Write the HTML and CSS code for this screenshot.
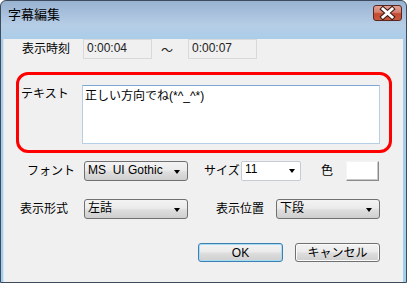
FILE: index.html
```html
<!DOCTYPE html>
<html lang="ja">
<head>
  <meta charset="UTF-8">
  <title>字幕編集</title>
  <link rel="stylesheet" href="styles.css">
</head>
<body>

  <div class="window">
    <div class="titlebar">
      <span class="title">字幕編集</span>
      <div class="close-btn">
        <svg width="29" height="16" viewBox="0 0 29 16">
          <path d="M10 4 L19 12 M19 4 L10 12" stroke="#3b1a16" stroke-width="5" stroke-linecap="square" fill="none"/>
          <path d="M10 4 L19 12 M19 4 L10 12" stroke="#ffffff" stroke-width="3" stroke-linecap="square" fill="none"/>
        </svg>
      </div>
    </div>

    <div class="client">
      <!-- 表示時刻 -->
      <div class="row row-time">
        <span class="label lbl-time">表示時刻</span>
        <div class="timebox">0:00:04</div>
        <span class="tilde">～</span>
        <div class="timebox">0:00:07</div>
      </div>

      <!-- テキスト -->
      <div class="group">
        <span class="label lbl-text">テキスト</span>
        <div class="textbox">正しい方向でね(*^_^*)</div>
      </div>

      <!-- フォント / サイズ / 色 -->
      <div class="row row-font">
        <span class="label lbl-font">フォント</span>
        <div class="select sel-font">MS&nbsp;&nbsp;UI Gothic<span class="arrow"></span></div>
        <span class="label lbl-size">サイズ</span>
        <div class="combo">11<span class="arrow"></span></div>
        <span class="label lbl-color">色</span>
        <div class="color-btn"></div>
      </div>

      <!-- 表示形式 / 表示位置 -->
      <div class="row row-pos">
        <span class="label lbl-format">表示形式</span>
        <div class="select">左詰<span class="arrow"></span></div>
        <span class="label lbl-place">表示位置</span>
        <div class="select">下段<span class="arrow"></span></div>
      </div>

      <div class="row row-buttons">
        <button class="btn btn-ok">OK</button>
        <button class="btn btn-cancel">キャンセル</button>
      </div>
    </div>
  </div>

</body>
</html>
```

FILE: styles.css
```css
* { margin: 0; padding: 0; box-sizing: border-box; }

body {
  font-family: 'Liberation Sans', 'Noto Sans CJK JP', sans-serif;
  font-size: 12px;
  line-height: 14px;
  color: #000;
  background: #ffffff;
}

.window {
  width: 407px;
  height: 283px;
  border: 1px solid #3d4b5c;
  border-radius: 6px 6px 0 0;
  background: linear-gradient(#98b2d1, #b6cde6 24px, #a9cde9 40px, #9fd0ee);
  overflow: hidden;
}

.titlebar {
  display: flex;
  align-items: flex-start;
  height: 24px;
}

.title {
  padding-left: 7px;
  margin-top: 6px;
  font-size: 13px;
  line-height: 15px;
  color: #000;
}

.close-btn {
  margin-left: auto;
  margin-right: 4px;
  margin-top: 4px;
  width: 29px;
  height: 16px;
  border: 1px solid #5a2620;
  border-radius: 3px;
  background: linear-gradient(#e2a193, #d5806e 45%, #c44b34 55%, #c65a3c);
  display: flex;
  align-items: center;
  justify-content: center;
}

.close-btn svg { display: block; margin: -1px; }

.client {
  margin: 0 3px 2px 2px;
  height: 255px;
  background: #f0f0f0;
  border-left: 1px solid #d6e2ee;
}

.row {
  display: flex;
  align-items: center;
}

.label {
  white-space: nowrap;
}

/* time row */
.row-time { margin-top: 14px; height: 20px; }
.lbl-time { margin-left: 18px; width: 61px; }

.timebox {
  width: 69px;
  height: 20px;
  border: 1px solid #d9d9d9;
  background: #f0f0f0;
  padding: 1px 3px;
  align-self: flex-start;
  color: #222;
}

.tilde {
  width: 12px;
  margin: 4px 15px 0 9px;
  font-size: 12px;
  color: #222;
}

/* text group */
.group {
  display: flex;
  margin: 13px 0 0 12px;
  width: 376px;
  height: 81px;
  border: 3px solid #ff0000;
  border-radius: 12px;
  padding: 10px 0 0 2px;
}

.lbl-text { width: 61px; margin-top: 2px; }

.textbox {
  width: 298px;
  height: 59px;
  background: #ffffff;
  border: 1px solid #b5cfe7;
  border-top-color: #7ea8d3;
  padding: 3px 2px;
}

/* font row */
.row-font { margin-top: 8px; height: 20px; }
.lbl-font { margin-left: 23px; width: 57px; }

.select {
  position: relative;
  width: 104px;
  height: 20px;
  border: 1px solid #707070;
  border-radius: 3px;
  background: linear-gradient(#f3f3f3, #ebebeb 45%, #dedede 55%, #cfcfcf);
  padding: 1px 3px;
  align-self: flex-start;
}

.arrow {
  position: absolute;
  right: 7px;
  top: 8px;
  width: 0;
  height: 0;
  border-left: 3.5px solid transparent;
  border-right: 3.5px solid transparent;
  border-top: 4px solid #000;
}

.lbl-size { margin-left: 16px; width: 37px; }

.combo {
  position: relative;
  width: 60px;
  height: 20px;
  border: 1px solid #c5ccd6;
  border-radius: 2px;
  background: #ffffff;
  padding: 0 3px;
  align-self: flex-start;
}

.combo .arrow { right: 5px; top: 7px; }

.lbl-color { margin-left: 20px; width: 25px; }

.color-btn {
  width: 33px;
  height: 20px;
  background: #ffffff;
  border: 1px solid;
  border-color: #f4f4f4 #8a8a8a #8a8a8a #f4f4f4;
  box-shadow: inset -1px -1px 0 #c8c8c8;
}

/* position row */
.row-pos { margin-top: 18px; height: 20px; }
.lbl-format { margin-left: 16px; width: 64px; }
.lbl-place { margin-left: 28px; width: 60px; }

/* buttons */
.row-buttons { margin-top: 24px; }

.btn {
  height: 19px;
  width: 85px;
  font-family: 'Liberation Sans', 'Noto Sans CJK JP', sans-serif;
  font-size: 12px;
  line-height: 14px;
  border-radius: 3px;
  color: #000;
  background: linear-gradient(#f3f3f3, #ebebeb 45%, #dddddd 55%, #cfcfcf);
}

.btn-ok {
  margin-left: 194px;
  border: 1px solid #3c7fb1;
  box-shadow: inset 0 0 0 1px #a8dcf5;
}

.btn-cancel {
  margin-left: 12px;
  border: 1px solid #707070;
  box-shadow: inset 0 0 0 1px #fbfbfb;
}
```
